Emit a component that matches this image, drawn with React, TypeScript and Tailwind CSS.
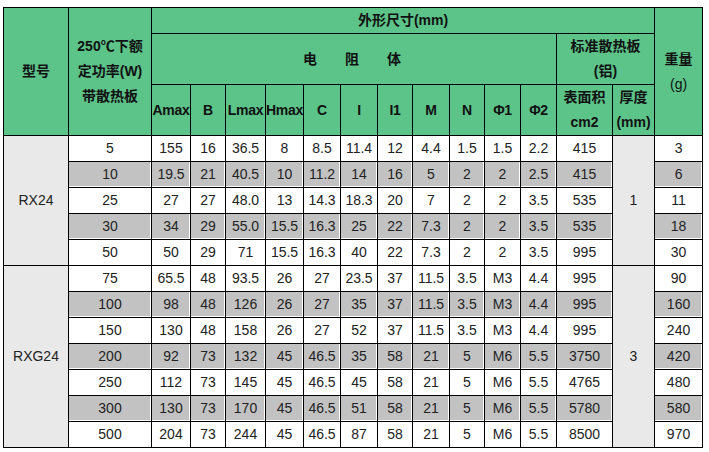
import React from "react";

type Row = string[];

// 额定功率, Amax, B, Lmax, Hmax, C, I, I1, M, N, Φ1, Φ2, 表面积, 重量
const RX24: Row[] = [
  ["5", "155", "16", "36.5", "8", "8.5", "11.4", "12", "4.4", "1.5", "1.5", "2.2", "415", "3"],
  ["10", "19.5", "21", "40.5", "10", "11.2", "14", "16", "5", "2", "2", "2.5", "415", "6"],
  ["25", "27", "27", "48.0", "13", "14.3", "18.3", "20", "7", "2", "2", "3.5", "535", "11"],
  ["30", "34", "29", "55.0", "15.5", "16.3", "25", "22", "7.3", "2", "2", "3.5", "535", "18"],
  ["50", "50", "29", "71", "15.5", "16.3", "40", "22", "7.3", "2", "2", "3.5", "995", "30"],
];

const RXG24: Row[] = [
  ["75", "65.5", "48", "93.5", "26", "27", "23.5", "37", "11.5", "3.5", "M3", "4.4", "995", "90"],
  ["100", "98", "48", "126", "26", "27", "35", "37", "11.5", "3.5", "M3", "4.4", "995", "160"],
  ["150", "130", "48", "158", "26", "27", "52", "37", "11.5", "3.5", "M3", "4.4", "995", "240"],
  ["200", "92", "73", "132", "45", "46.5", "35", "58", "21", "5", "M6", "5.5", "3750", "420"],
  ["250", "112", "73", "145", "45", "46.5", "45", "58", "21", "5", "M6", "5.5", "4765", "480"],
  ["300", "130", "73", "170", "45", "46.5", "51", "58", "21", "5", "M6", "5.5", "5780", "580"],
  ["500", "204", "73", "244", "45", "46.5", "87", "58", "21", "5", "M6", "5.5", "8500", "970"],
];

const COLS = [65, 83, 39, 35, 40, 38, 37, 37, 35, 37, 35, 36, 36, 56, 42, 48];

const TH = "border border-black bg-[#5cc389] font-bold text-[14px] text-[#111] text-center align-middle p-0 whitespace-nowrap";
const TD = "border border-black h-[26px] text-center align-middle p-0 text-[14px] text-[#222]";
const GRAY = "bg-[#c2c2c2] shadow-[inset_-1px_-1px_0_#fff]";

function Group({ name, rows, thick }: { name: string; rows: Row[]; thick: string }) {
  return (
    <>
      {rows.map((r, i) => {
        const shade = i % 2 === 1 ? GRAY : "bg-white";
        return (
          <tr key={i}>
            {i === 0 && (
              <td rowSpan={rows.length} className={`${TD} bg-[#e9e9e9]`}>
                {name}
              </td>
            )}
            {r.slice(0, 13).map((v, j) => (
              <td key={j} className={`${TD} ${shade}`}>
                {v}
              </td>
            ))}
            {i === 0 && (
              <td rowSpan={rows.length} className={`${TD} bg-[#e9e9e9]`}>
                {thick}
              </td>
            )}
            <td className={`${TD} ${shade}`}>{r[13]}</td>
          </tr>
        );
      })}
    </>
  );
}

export default function App() {
  const dims = ["Amax", "B", "Lmax", "Hmax", "C", "I", "I1", "M", "N", "Φ1", "Φ2"];
  return (
    <div
      className="w-[709px] h-[452px] bg-white pt-[7px] pl-[3px]"
      style={{ fontFamily: '"Liberation Sans", Arial, "Noto Sans CJK SC", sans-serif' }}
    >
      <table className="table-fixed border-collapse w-[699px]">
        <colgroup>
          {COLS.map((w, i) => (
            <col key={i} style={{ width: w }} />
          ))}
        </colgroup>
        <thead>
          <tr className="h-[26px]">
            <th rowSpan={3} className={TH}>
              型号
            </th>
            <th rowSpan={3} className={`${TH} leading-[25px]`}>
              250℃下额
              <br />
              定功率(W)
              <br />
              带散热板
            </th>
            <th colSpan={13} className={TH}>
              外形尺寸(mm)
            </th>
            <th rowSpan={3} className={`${TH} leading-[25px]`}>
              <div>重量</div>
              <div className="font-normal">(g)</div>
            </th>
          </tr>
          <tr className="h-[51px]">
            <th colSpan={11} className={TH}>
              <div className="flex justify-center gap-[28px] pr-[4px]">
                <span>电</span>
                <span>阻</span>
                <span>体</span>
              </div>
            </th>
            <th colSpan={2} className={`${TH} leading-[25px]`}>
              标准散热板
              <br />
              (铝)
            </th>
          </tr>
          <tr className="h-[51px]">
            {dims.map((d) => (
              <th key={d} className={`${TH} tracking-[-0.3px]`}>
                {d}
              </th>
            ))}
            <th className={`${TH} leading-[25px]`}>
              表面积
              <br />
              cm2
            </th>
            <th className={`${TH} leading-[25px]`}>
              厚度
              <br />
              (mm)
            </th>
          </tr>
        </thead>
        <tbody>
          <Group name="RX24" rows={RX24} thick="1" />
          <Group name="RXG24" rows={RXG24} thick="3" />
        </tbody>
      </table>
    </div>
  );
}
